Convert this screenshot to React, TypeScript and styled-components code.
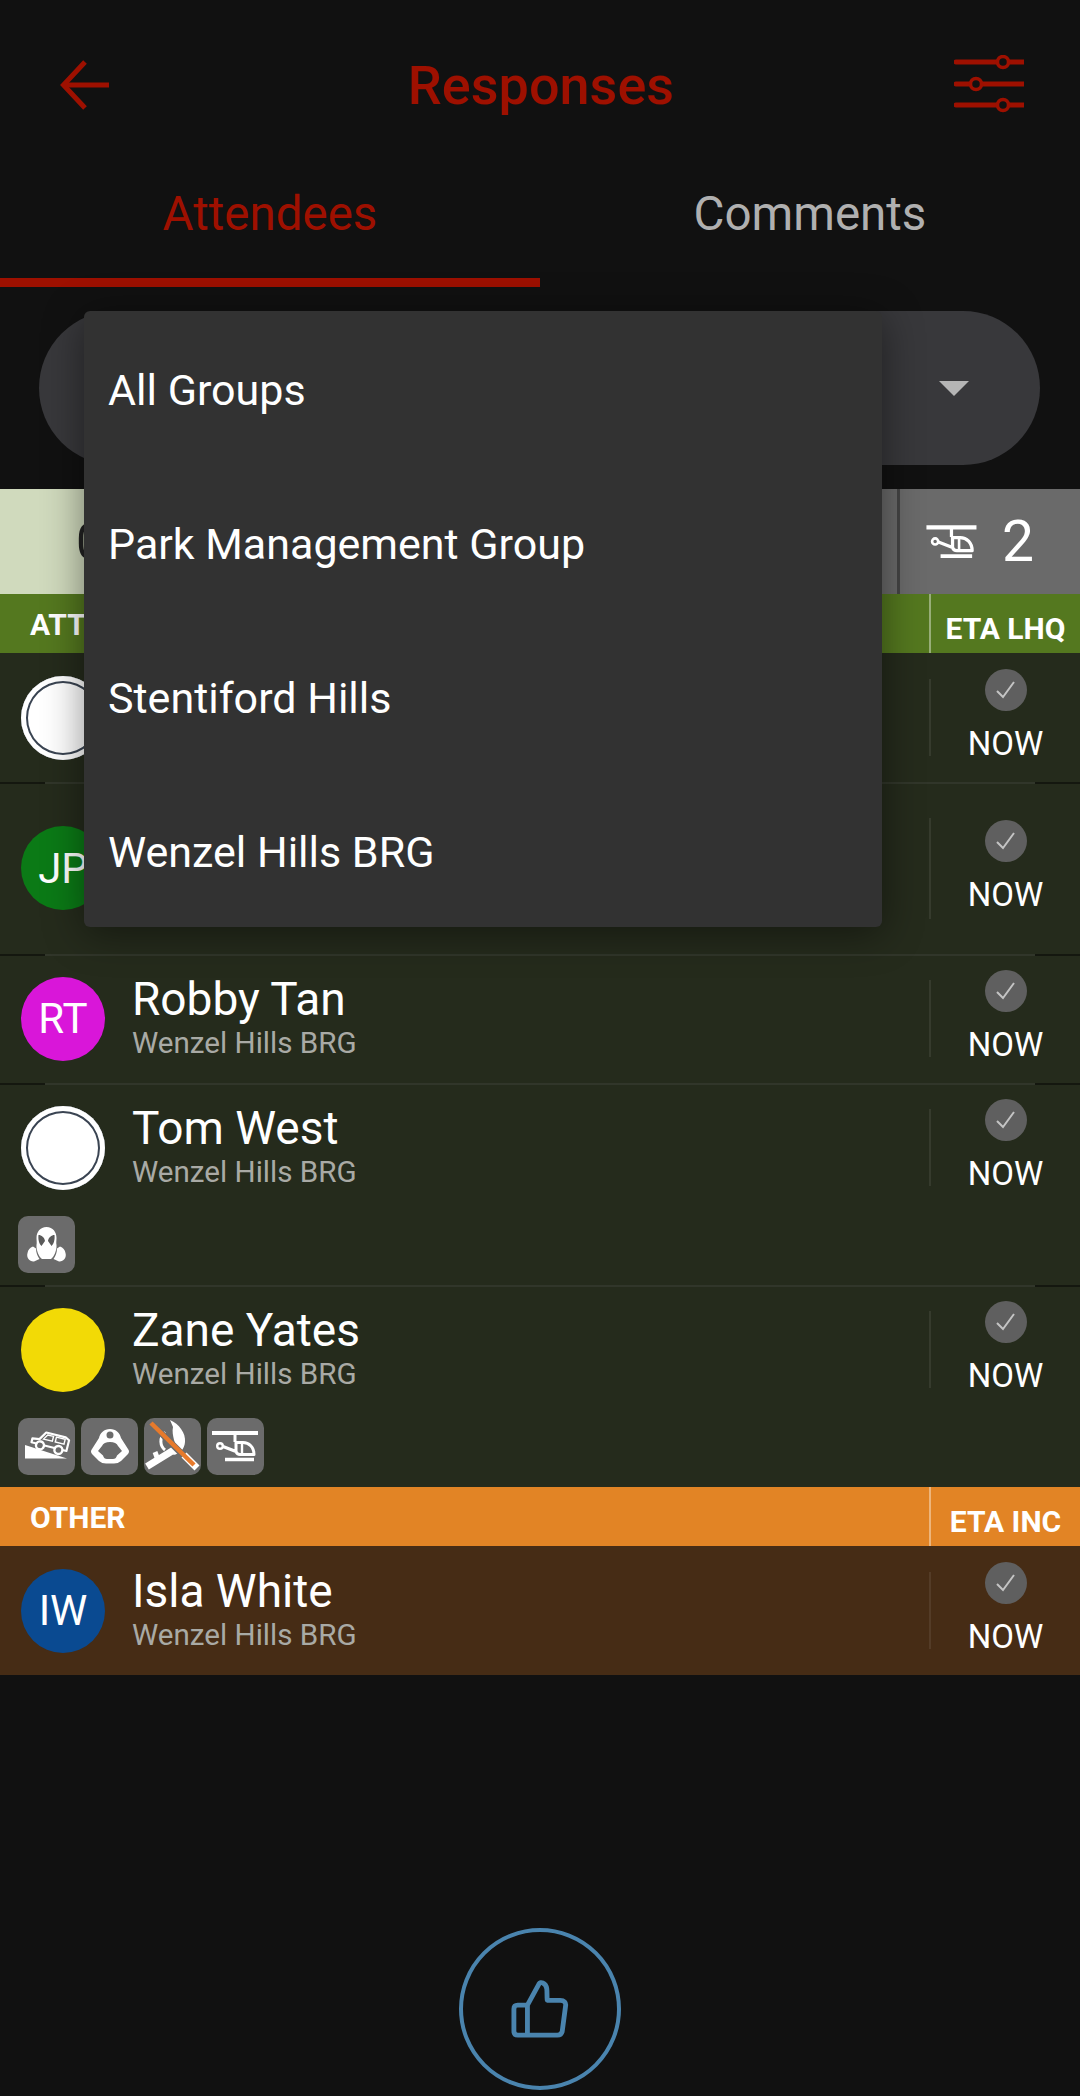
import styled, { createGlobalStyle } from "styled-components";

const RED = "#9e1000";

const GlobalStyle = createGlobalStyle`
  html, body {
    margin: 0;
    padding: 0;
    background: #111111;
  }
  * {
    box-sizing: border-box;
  }
`;

const Helicopter = ({ size = 57 }: { size?: number }) => (
  <svg width={size} height={size} viewBox="0 0 57 57" fill="none" stroke="#fff">
    <path d="M5 15H51" strokeWidth="4" />
    <path d="M28 15V24" strokeWidth="3" />
    <circle cx="13" cy="28" r="2.8" strokeWidth="2.4" />
    <path
      d="M16 28.500L29 33.500V24.500H36C42 24.500 47 29 47 36.500H33C30.500 36.500 29.500 35 29 33.500"
      strokeWidth="3"
      strokeLinejoin="round"
    />
    <path d="M35 25V36" strokeWidth="2.4" />
    <path d="M18 41.500H47" strokeWidth="3.600" />
  </svg>
);

const GasMask = () => (
  <svg width="57" height="57" viewBox="0 0 57 57">
    <path
      fill="#fff"
      d="M28.500 11C35 11 38.500 16 38.500 22C38.500 24.500 38 27 38.500 29C39 34 36 41 33 43H24C21 41 18 34 18.500 29C19 27 18.500 24.500 18.500 22C18.500 16 22 11 28.500 11Z"
    />
    <path
      fill="#5a5a5a"
      d="M20.500 19C23.500 19 26.500 21.500 27 25L23.500 30C21 28 20 23 20.500 19ZM36.500 19C33.500 19 30.500 21.500 30 25L33.500 30C36 28 37 23 36.500 19Z"
    />
    <path fill="#fff" d="M15 30.500L18 32.500C18 37 19.500 40 21.500 43L16 45.500C12 46 8 42 9.500 37C10 34 12 31.500 15 30.500Z" />
    <path fill="#fff" d="M42 30.500L39 32.500C39 37 37.500 40 35.500 43L41 45.500C45 46 49 42 47.500 37C47 34 45 31.500 42 30.500Z" />
  </svg>
);

const Jeep = () => (
  <svg width="57" height="57" viewBox="0 0 57 57">
    <path fill="#fff" d="M7 40.500V27L49 40.500Z" />
    <g transform="rotate(14 29 24)" fill="none" stroke="#fff">
      <path
        d="M14 24L21 23L26 15H46L50 17V28H14Z"
        fill="#6b6b6b"
        strokeWidth="2.200"
        strokeLinejoin="round"
      />
      <path d="M28 17H34V22H25ZM37 17H46V22H37Z" strokeWidth="1.400" />
      <circle cx="23" cy="29" r="4" fill="#6b6b6b" strokeWidth="2.400" />
      <circle cx="42" cy="29" r="4" fill="#6b6b6b" strokeWidth="2.400" />
    </g>
  </svg>
);

const Helmet = () => (
  <svg width="57" height="57" viewBox="0 0 57 57">
    <path
      fill="#fff"
      fillRule="evenodd"
      d="M29 11C35 11 39 15 40 20L47 31Q49 33.500 47 36L40 43Q37 45.500 33 45.500H25Q21 45.500 18 43L11 36Q9 33.500 11 31L18 20C19 15 23 11 29 11ZM29 24C33 24 36 25.500 37 28L41 33L36 37.500Q35 41 32 41H26Q23 41 22 37.500L17 33L21 28C22 25.500 25 24 29 24ZM29 13.500A3.500 3.500 0 1 0 29 20.500A3.500 3.500 0 1 0 29 13.500Z"
    />
  </svg>
);

const NoTools = () => (
  <svg width="57" height="57" viewBox="0 0 57 57" fill="none">
    <path d="M3 48.500L33 30" stroke="#fff" strokeWidth="7" />
    <path d="M14 42L11 34" stroke="#fff" strokeWidth="5" />
    <path d="M21 14C15 20 16 28 21 32" stroke="#fff" strokeWidth="3" />
    <path
      fill="#fff"
      d="M26 2C35 6 42 15 41 24C40.500 31 36 36 29 37C33 32 32 27 30 22C29 18 28 13 29 9C28 7 27 4 26 2Z"
    />
    <path d="M6 4L38 36" stroke="#6b6b6b" strokeWidth="6.500" />
    <path d="M40 37L53 50" stroke="#fff" strokeWidth="7" />
    <path d="M7 5L50 47" stroke="#e77a2c" strokeWidth="4.500" />
  </svg>
);

const BackArrow = () => (
  <svg width="52" height="50" viewBox="0 0 52 50" fill="none" stroke={RED} strokeWidth="5">
    <path d="M27 2L5.500 25L27 48" />
    <path d="M6 25H51" />
  </svg>
);

const Sliders = () => (
  <svg width="70" height="60" viewBox="0 0 70 60" fill="none" stroke={RED}>
    <path d="M2 7H70M2 29H70M2 50H70" strokeWidth="5" strokeLinecap="round" />
    <circle cx="49" cy="7" r="5.500" fill="#111" strokeWidth="3.500" />
    <circle cx="22" cy="29" r="5.500" fill="#111" strokeWidth="3.500" />
    <circle cx="49" cy="50" r="5.500" fill="#111" strokeWidth="3.500" />
  </svg>
);

const Caret = () => (
  <svg width="30" height="15" viewBox="0 0 30 15">
    <path d="M0 0H30L15 15Z" fill="#b5b5b5" />
  </svg>
);

const Check = () => (
  <svg width="22" height="22" viewBox="0 0 22 22" fill="none" stroke="#c4c4c4" strokeWidth="2">
    <path d="M2 12L8 18L19 3" />
  </svg>
);

const ThumbUp = () => (
  <svg width="58" height="60" viewBox="0 0 60 62" fill="none" stroke="#4a84ae" strokeWidth="5" strokeLinejoin="round">
    <path d="M17 27V58H7C4.500 58 3 56.500 3 54V31C3 28.500 4.500 27 7 27H17L29 5C30 2.500 36 3.500 37 10C37.500 14 37 18 37.500 22H51C55 22 57 24.500 56.500 27.500L53 54C52.500 56.500 51 58 48 58H17" />
  </svg>
);

const chipIcons = {
  jeep: <Jeep />,
  helmet: <Helmet />,
  tools: <NoTools />,
  helicopter: <Helicopter />,
  mask: <GasMask />,
};

type ChipName = keyof typeof chipIcons;

const attending: {
  initials?: string;
  colour: string;
  ring?: boolean;
  name?: string;
  group?: string;
  tall?: boolean;
  chips?: ChipName[];
}[] = [
  { colour: "#fff", ring: true },
  { initials: "JP", colour: "#0b7a16", tall: true },
  { initials: "RT", colour: "#d916d9", name: "Robby Tan", group: "Wenzel Hills BRG" },
  { colour: "#fff", ring: true, name: "Tom West", group: "Wenzel Hills BRG", chips: ["mask"] },
  {
    colour: "#f2da06",
    name: "Zane Yates",
    group: "Wenzel Hills BRG",
    chips: ["jeep", "helmet", "tools", "helicopter"],
  },
];

const groups = ["All Groups", "Park Management Group", "Stentiford Hills", "Wenzel Hills BRG"];

export default function App() {
  return (
    <Page>
      <GlobalStyle />
      <TopBar>
        <BackArrow />
        <Title>Responses</Title>
        <Sliders />
      </TopBar>
      <Tabs>
        <Tab $active>Attendees</Tab>
        <Tab>Comments</Tab>
      </Tabs>
      <FilterArea>
        <FilterPill>
          <Caret />
        </FilterPill>
        <GroupMenu>
          {groups.map((group) => (
            <GroupItem key={group}>{group}</GroupItem>
          ))}
        </GroupMenu>
      </FilterArea>
      <Stats>
        <LightStat>0</LightStat>
        <GreyStat />
        <HeliStat>
          <Helicopter size={62} />
          <StatNumber>2</StatNumber>
        </HeliStat>
      </Stats>
      <SectionHeader $tone="#54781f">
        <SectionTitle>ATTENDING</SectionTitle>
        <SectionEta>ETA LHQ</SectionEta>
      </SectionHeader>
      {attending.map((person, i) => (
        <PersonRow key={i} $bg="#252b1c" $split={i > 0}>
          <RowMain $tall={person.tall}>
            <Avatar $colour={person.colour} $ring={person.ring}>
              {person.initials}
            </Avatar>
            <Identity>
              <Name>{person.name}</Name>
              <Group>{person.group}</Group>
            </Identity>
            <Eta $tall={person.tall}>
              <CheckDot>
                <Check />
              </CheckDot>
              <Now>NOW</Now>
            </Eta>
          </RowMain>
          {person.chips && (
            <Chips>
              {person.chips.map((chip) => (
                <Chip key={chip}>{chipIcons[chip]}</Chip>
              ))}
            </Chips>
          )}
        </PersonRow>
      ))}
      <SectionHeader $tone="#e28425">
        <SectionTitle>OTHER</SectionTitle>
        <SectionEta>ETA INC</SectionEta>
      </SectionHeader>
      <PersonRow $bg="#462c15">
        <RowMain>
          <Avatar $colour="#0a4a91">IW</Avatar>
          <Identity>
            <Name>Isla White</Name>
            <Group>Wenzel Hills BRG</Group>
          </Identity>
          <Eta>
            <CheckDot>
              <Check />
            </CheckDot>
            <Now>NOW</Now>
          </Eta>
        </RowMain>
      </PersonRow>
      <Footer>
        <LikeButton>
          <ThumbUp />
        </LikeButton>
      </Footer>
    </Page>
  );
}

const Page = styled.div`
  width: 1080px;
  height: 2096px;
  overflow: hidden;
  background: #111111;
  color: #fff;
  font-family: Roboto, "Liberation Sans", sans-serif;
  display: flex;
  flex-direction: column;
`;

const TopBar = styled.div`
  height: 170px;
  padding: 0 56px 0 58px;
  display: grid;
  grid-template-columns: 1fr auto 1fr;
  align-items: center;
  justify-items: start;
  & > :last-child {
    justify-self: end;
  }
`;

const Title = styled.div`
  font-size: 54px;
  font-weight: 500;
  color: ${RED};
`;

const Tabs = styled.div`
  height: 117px;
  display: flex;
`;

const Tab = styled.div<{ $active?: boolean }>`
  flex: 1;
  padding-bottom: 20px;
  display: flex;
  align-items: center;
  justify-content: center;
  font-size: 47.500px;
  color: ${(p) => (p.$active ? RED : "#b0b0b0")};
  border-bottom: 9px solid ${(p) => (p.$active ? RED : "transparent")};
`;

const FilterArea = styled.div`
  position: relative;
  padding: 24px 40px 24px 39px;
`;

const FilterPill = styled.div`
  height: 154px;
  border-radius: 77px;
  background: #38383b;
  padding-right: 71px;
  display: flex;
  align-items: center;
  justify-content: flex-end;
`;

const GroupMenu = styled.div`
  position: absolute;
  z-index: 2;
  top: 24px;
  left: 84px;
  width: 798px;
  border-radius: 6px;
  background: #323232;
  box-shadow: 0 6px 40px rgba(0, 0, 0, 0.45);
`;

const GroupItem = styled.div`
  height: 154px;
  padding: 3px 24px 0;
  display: flex;
  align-items: center;
  font-size: 43px;
`;

const Stats = styled.div`
  height: 105px;
  display: flex;
`;

const LightStat = styled.div`
  width: 450px;
  padding-left: 76px;
  display: flex;
  align-items: center;
  background: #d0dabd;
  color: #222;
  font-size: 50px;
`;

const GreyStat = styled.div`
  flex: 1;
  background: #6a6a6a;
`;

const HeliStat = styled.div`
  width: 183px;
  padding-left: 21px;
  display: flex;
  align-items: center;
  gap: 19px;
  background: #6a6a6a;
  border-left: 3px solid #444;
`;

const StatNumber = styled.div`
  font-size: 57px;
`;

const SectionHeader = styled.div<{ $tone: string }>`
  height: 59px;
  display: flex;
  background: ${(p) => p.$tone};
`;

const SectionTitle = styled.div`
  flex: 1;
  padding: 1px 0 0 30px;
  display: flex;
  align-items: center;
  font-size: 30px;
  font-weight: 700;
`;

const SectionEta = styled.div`
  width: 151px;
  padding-top: 9px;
  display: flex;
  align-items: center;
  justify-content: center;
  border-left: 2px solid rgba(255, 255, 255, 0.4);
  font-size: 30px;
  font-weight: 700;
  white-space: nowrap;
`;

const PersonRow = styled.div<{ $bg: string; $split?: boolean }>`
  background-color: ${(p) => p.$bg};
  background-image: ${(p) =>
    p.$split
      ? "linear-gradient(to right, #14170f 45px, #31362a 45px, #31362a 1035px, #14170f 1035px)"
      : "none"};
  background-size: 100% 2px;
  background-repeat: no-repeat;
`;

const RowMain = styled.div<{ $tall?: boolean }>`
  height: ${(p) => (p.$tall ? 172 : 129)}px;
  padding-left: 21px;
  display: flex;
  align-items: center;
`;

const Avatar = styled.div<{ $colour: string; $ring?: boolean }>`
  width: 84px;
  height: 84px;
  flex: none;
  border-radius: 50%;
  display: flex;
  align-items: center;
  justify-content: center;
  background: ${(p) => p.$colour};
  box-shadow: ${(p) => (p.$ring ? "inset 0 0 0 5px #fff, inset 0 0 0 7px #3a4452" : "none")};
  font-size: 42px;
`;

const Identity = styled.div`
  flex: 1;
  padding: 0 0 4px 27px;
  display: flex;
  flex-direction: column;
`;

const Name = styled.div`
  font-size: 46px;
  line-height: 52px;
`;

const Group = styled.div`
  font-size: 29.600px;
  line-height: 36px;
  color: #a9aaa5;
`;

const Eta = styled.div<{ $tall?: boolean }>`
  width: 151px;
  height: ${(p) => (p.$tall ? 101 : 77)}px;
  flex: none;
  padding-bottom: 5px;
  border-left: 2px solid rgba(255, 255, 255, 0.08);
  display: flex;
  flex-direction: column;
  align-items: center;
  justify-content: center;
  gap: 15px;
`;

const CheckDot = styled.div`
  width: 42px;
  height: 42px;
  flex: none;
  border-radius: 50%;
  background: #5f5f5f;
  display: flex;
  align-items: center;
  justify-content: center;
`;

const Now = styled.div`
  font-size: 33px;
  line-height: 35px;
`;

const Chips = styled.div`
  padding: 4px 0 12px 18px;
  display: flex;
  gap: 6px;
`;

const Chip = styled.div`
  width: 57px;
  height: 57px;
  border-radius: 10px;
  background: #6b6b6b;
  overflow: hidden;
`;

const Footer = styled.div`
  flex: 1;
  padding-bottom: 6px;
  display: flex;
  align-items: flex-end;
  justify-content: center;
`;

const LikeButton = styled.div`
  width: 162px;
  height: 162px;
  border-radius: 50%;
  border: 4px solid #4a84ae;
  display: flex;
  align-items: center;
  justify-content: center;
`;
